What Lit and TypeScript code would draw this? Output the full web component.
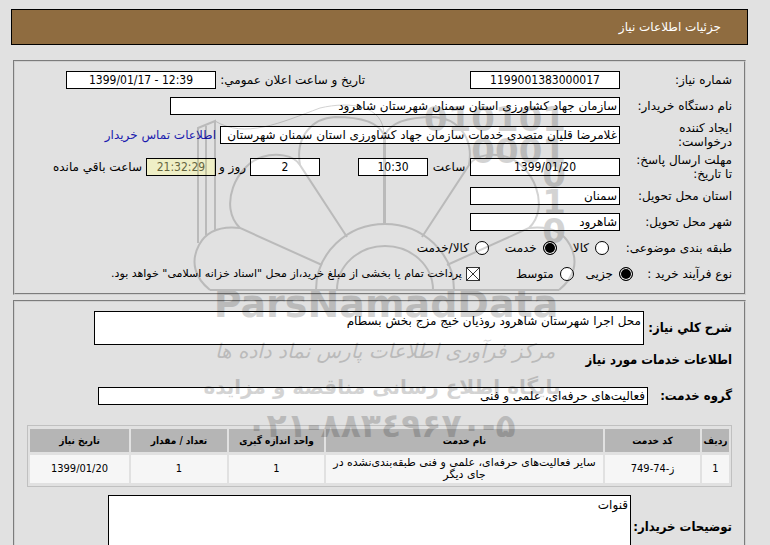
import { LitElement, css, html, svg } from "lit";
import { customElement } from "lit/decorators.js";

interface Column {
  title: string;
  width: string;
}

const columns: Column[] = [
  { title: "ردیف", width: "27px" },
  { title: "کد خدمت", width: "95px" },
  { title: "نام خدمت", width: "auto" },
  { title: "واحد اندازه گیری", width: "95px" },
  { title: "تعداد / مقدار", width: "96px" },
  { title: "تاریخ نیاز", width: "99px" },
];

const services: string[][] = [
  [
    "1",
    "ز-74-749",
    "سایر فعالیت‌های حرفه‌ای، علمی و فنی طبقه‌بندی‌نشده در جای دیگر",
    "1",
    "1",
    "1399/01/20",
  ],
];

@customElement("page-watermark")
export class PageWatermark extends LitElement {
  static styles = css`
    :host {
      position: absolute;
      top: 95px;
      left: 185px;
      pointer-events: none;
    }
    svg {
      display: block;
      direction: ltr;
      font-family: "DejaVu Sans", sans-serif;
      opacity: 0.17;
    }
    .line {
      fill: none;
      stroke: #000;
      stroke-width: 2;
    }
    .thin {
      stroke-width: 1;
    }
    .heavy {
      font-weight: 700;
    }
    .phone {
      direction: ltr;
      unicode-bidi: bidi-override;
    }
  `;

  private half = svg`
    <path d="M384 225 V135 C378 121 358 117 335 117 C312 118 295 137 300 165 L347 237" />
    <path d="M300 165 C293 154 275 153 262 157 C236 165 218 207 240 228 L322 265" />
    <path d="M240 228 C222 226 207 230 199 245 C190 262 195 278 210 290" />
  `;

  render() {
    return html`
      <svg width="400" height="350" viewBox="185 95 400 350" aria-hidden="true">
        <g class="line">
          ${this.half}
          <g transform="translate(769 0) scale(-1 1)">${this.half}</g>
          <path d="M210 290 H559" />
          <path d="M316 290 A69 66 0 0 1 454 290" />
          <path d="M337 290 A48 44 0 0 1 433 290" />
          <path d="M198 243 V128 L215 121 V230 M206 235 V126" />
          <path class="thin" d="M215 121 C245 139 280 123 320 108 C350 101 384 105 384 135" />
        </g>
        <g class="heavy" font-size="34" text-anchor="end">
          <text x="566" y="131">010101</text>
          <text x="566" y="163">0001</text>
          <text x="566" y="187">0</text>
          <text x="566" y="214">1</text>
          <text x="566" y="243">0</text>
        </g>
        <g text-anchor="middle">
          <text class="heavy" x="386" y="317" font-size="38">ParsNamadData</text>
          <text x="385" y="358" font-size="20" font-style="italic">مرکز فرآوری اطلاعات پارس نماد داده ها</text>
          <text class="heavy" x="382" y="394" font-size="20">پایگاه اطلاع رسانی مناقصه و مزایده</text>
          <text class="heavy phone" x="381" y="437" font-size="33">۰۲۱-۸۸۳٤۹۶۷۰-۵</text>
        </g>
      </svg>
    `;
  }
}

@customElement("app-root")
export class AppRoot extends LitElement {
  static styles = css`
    :host {
      display: block;
      height: 100vh;
      overflow-y: auto;
      scrollbar-width: none;
      background: #e1e1e1;
      color: #000;
      direction: rtl;
      font: 12px/14px "DejaVu Sans", sans-serif;
    }
    * {
      box-sizing: border-box;
    }
    .page {
      position: relative;
      padding: 9px 24px 16px 13px;
    }
    .title {
      margin: 0 -2px 15px;
      padding: 10px 26px 10px 0;
      border: 1px solid #000;
      background: #8f6c40;
      color: #fff;
      font-size: 12px;
      font-weight: 400;
      line-height: 14px;
    }
    .panel {
      min-width: 0;
      margin: 0 0 5px;
      border: 2px groove #d0d0d0;
      padding: 5px 12px 6px;
    }
    .services {
      padding-top: 9px;
    }
    .row {
      display: flex;
      align-items: center;
      min-height: 26px;
      white-space: nowrap;
    }
    .tall {
      min-height: 32px;
    }
    .group {
      min-height: 42px;
    }
    .name {
      flex: none;
      width: 112px;
    }
    .process {
      width: 99px;
    }
    .strong,
    h2 {
      font-family: "DejaVu Sans Condensed", "DejaVu Sans", sans-serif;
      font-size: 13px;
      font-weight: 700;
    }
    .w84 {
      width: 84px;
    }
    .w88 {
      width: 88px;
    }
    .w101 {
      width: 101px;
    }
    input,
    textarea {
      margin: 0;
      border: 1px solid #000;
      border-radius: 0;
      background: #fff;
      color: #000;
      font: inherit;
      outline: none;
    }
    .box {
      flex: none;
      width: 150px;
      height: 18px;
      padding: 0 2px;
    }
    .num {
      direction: ltr;
      font-family: "DejaVu Sans Condensed", "DejaVu Sans", sans-serif;
      text-align: center;
    }
    .small {
      width: 70px;
    }
    .wide {
      width: 450px;
    }
    .long {
      width: 400px;
    }
    .service {
      width: 550px;
    }
    .countdown {
      background: #efefc6;
      color: #65653f;
    }
    .published {
      width: 149px;
      margin-right: 105px;
    }
    .hour {
      width: 42px;
      text-align: center;
    }
    .days {
      width: 34px;
      padding-right: 4px;
    }
    .left {
      margin-right: 38px;
    }
    .after {
      margin-right: 4px;
    }
    a {
      color: #1a1aae;
      text-decoration: none;
    }
    .choices {
      display: flex;
      gap: 16px;
      margin-right: 11px;
    }
    .types {
      margin-right: 0;
      gap: 12px;
    }
    .choice {
      display: flex;
      align-items: center;
      gap: 6px;
    }
    .choice input {
      appearance: none;
      width: 14px;
      height: 14px;
    }
    .choice input[type="radio"] {
      border-radius: 50%;
    }
    .choice input[type="radio"]:checked {
      background: #000;
      box-shadow: inset 0 0 0 1px #fff;
    }
    .choice input[type="checkbox"] {
      border-color: #333;
    }
    .choice input[type="checkbox"]:checked {
      background:
        linear-gradient(45deg, transparent 47%, #333 47%, #333 53%, transparent 53%),
        linear-gradient(-45deg, transparent 47%, #333 47%, #333 53%, transparent 53%),
        #fff;
    }
    .treasury {
      gap: 4px;
      margin-right: 36px;
      font-size: 11px;
    }
    textarea {
      display: block;
      flex: none;
      padding: 2px;
      resize: none;
      overflow: hidden;
    }
    .summary {
      width: 550px;
      height: 34px;
    }
    .notes {
      width: 523px;
      height: 64px;
    }
    h2 {
      margin: 0;
      line-height: 30px;
    }
    table {
      width: 100%;
      margin: 8px 0;
      table-layout: fixed;
      border: 1px solid #c0c0c0;
      border-collapse: separate;
      border-spacing: 2px 3px;
      font-family: "DejaVu Sans Condensed", "DejaVu Sans", sans-serif;
      font-size: 11px;
      line-height: 12px;
      text-align: center;
    }
    th {
      height: 23px;
      padding: 0;
      background: #b5b5b5;
      font-size: 10px;
      white-space: nowrap;
    }
    td {
      height: 28px;
      padding: 2px;
      background: #f6f6f6;
    }
    td:nth-child(3) {
      font-family: "DejaVu Sans", sans-serif;
    }
  `;

  private radio(group: string, text: string, checked = false) {
    return html`<label class="choice">
      <input type="radio" name=${group} ?checked=${checked} />${text}
    </label>`;
  }

  render() {
    return html`
      <main class="page">
        <h1 class="title">جزئیات اطلاعات نیاز</h1>

        <fieldset class="panel" aria-label="جزئیات اطلاعات نیاز">
          <div class="row">
            <label class="name" for="number">شماره نیاز:</label>
            <input id="number" class="box num" readonly value="1199001383000017" />
            <label class="published" for="published">تاریخ و ساعت اعلان عمومي:</label>
            <input id="published" class="box num" readonly value="1399/01/17 - 12:39" />
          </div>
          <div class="row">
            <label class="name" for="buyer">نام دستگاه خریدار:</label>
            <input id="buyer" class="box wide" readonly value="سازمان جهاد کشاورزی استان سمنان شهرستان شاهرود" />
          </div>
          <div class="row tall">
            <label class="name" for="creator">ایجاد کننده<br />درخواست:</label>
            <input
              id="creator"
              class="box long"
              readonly
              value="غلامرضا قلیان متصدی خدمات سازمان جهاد کشاورزی استان سمنان شهرستان شاهرود"
            />
            <a class="after" href="#contact">اطلاعات تماس خریدار</a>
          </div>
          <div class="row tall">
            <label class="name" for="deadline">مهلت ارسال پاسخ:<br />تا تاریخ:</label>
            <input id="deadline" class="box num" readonly value="1399/01/20" />
            <label class="hour" for="hour">ساعت</label>
            <input id="hour" class="box small num" readonly value="10:30" />
            <input id="days" class="box small num left" readonly value="2" />
            <label class="days" for="days">روز و</label>
            <input id="remaining" class="box small num countdown" readonly value="21:32:29" />
            <label class="after" for="remaining">ساعت باقي مانده</label>
          </div>
          <div class="row">
            <label class="name" for="province">استان محل تحویل:</label>
            <input id="province" class="box" readonly value="سمنان" />
          </div>
          <div class="row">
            <label class="name" for="city">شهر محل تحویل:</label>
            <input id="city" class="box" readonly value="شاهرود" />
          </div>
          <div class="row">
            <span class="name">طبقه بندی موضوعی:</span>
            <div class="choices" role="radiogroup" aria-label="طبقه بندی موضوعی">
              ${this.radio("subject", "کالا")} ${this.radio("subject", "خدمت", true)}
              ${this.radio("subject", "کالا/خدمت")}
            </div>
          </div>
          <div class="row">
            <span class="name process">نوع فرآیند خرید :</span>
            <div class="choices types" role="radiogroup" aria-label="نوع فرآیند خرید">
              ${this.radio("process", "جزیی", true)} ${this.radio("process", "متوسط")}
            </div>
            <label class="choice treasury">
              <input type="checkbox" checked />پرداخت تمام یا بخشی از مبلغ خرید،از محل "اسناد خزانه اسلامی" خواهد بود.
            </label>
          </div>
        </fieldset>

        <fieldset class="panel services" aria-label="اطلاعات خدمات مورد نیاز">
          <div class="row">
            <label class="name strong w88" for="summary">شرح کلي نیاز:</label>
            <textarea id="summary" class="summary" readonly .value=${"محل اجرا شهرستان شاهرود روذیان خیج مزج بخش بسطام"}></textarea>
          </div>
          <h2>اطلاعات خدمات مورد نیاز</h2>
          <div class="row group">
            <label class="name strong w84" for="service">گروه خدمت:</label>
            <input id="service" class="box service" readonly value="فعالیت‌های حرفه‌ای، علمی و فنی" />
          </div>
          <table>
            <colgroup>
              ${columns.map((c) => html`<col style="width: ${c.width}" />`)}
            </colgroup>
            <thead>
              <tr>
                ${columns.map((c) => html`<th scope="col">${c.title}</th>`)}
              </tr>
            </thead>
            <tbody>
              ${services.map((row) => html`<tr>${row.map((cell) => html`<td>${cell}</td>`)}</tr>`)}
            </tbody>
          </table>
          <div class="row">
            <label class="name strong w101" for="notes">توضیحات خریدار:</label>
            <textarea id="notes" class="notes" readonly .value=${"قنوات"}></textarea>
          </div>
        </fieldset>

        <page-watermark></page-watermark>
      </main>
    `;
  }
}
